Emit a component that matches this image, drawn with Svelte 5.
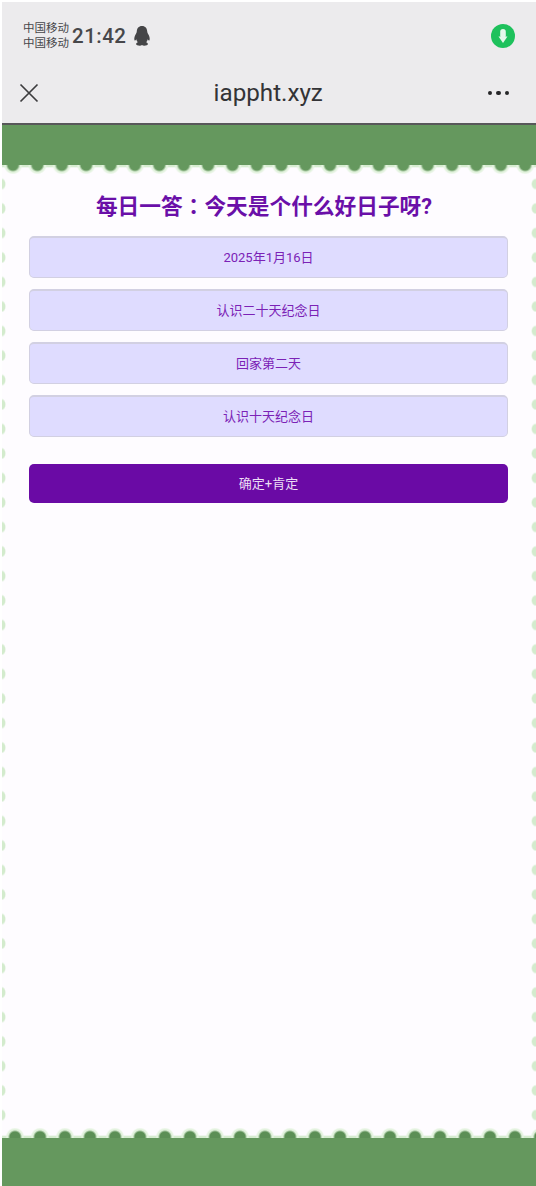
<script>
  const options = ["2025年1月16日", "认识二十天纪念日", "回家第二天", "认识十天纪念日"];
</script>

<div class="page">
  <header class="chrome">
    <div class="status">
      <div class="carriers">
        <span>中国移动</span>
        <span>中国移动</span>
      </div>
      <span class="time">21:42</span>
      <!-- QQ penguin -->
      <svg class="qq" viewBox="0 0 16 20" width="16" height="20">
        <path d="M8 0C4.600 0 3 2.400 2.800 5.200 2.700 6.600 2.200 7.400 1.400 8.800.4 10.800 0 12.800.5 14.200c.4.800 1.200.2 1.800-1 .2 1.200.8 2.200 1.600 3-1 .4-1.800 1-1.800 1.800 0 1 1.700 1.700 3.700 1.700.9 0 1.700-.3 2.200-.7.5.4 1.300.7 2.200.7 2 0 3.700-.7 3.700-1.700 0-.8-.8-1.400-1.800-1.800.8-.8 1.400-1.800 1.600-3 .6 1.200 1.400 1.800 1.800 1 .5-1.400.1-3.400-.9-5.400-.8-1.400-1.300-2.200-1.400-3.600C13 2.400 11.400 0 8 0z" />
      </svg>
      <svg class="mic" viewBox="0 0 24 24" width="24" height="24">
        <circle cx="12" cy="12" r="12" fill="#1ec15c" />
        <rect x="9.200" y="5" width="5.600" height="9" rx="2.800" fill="#e4f8ea" />
        <path d="M7.500 12.500L12 19l4.500-6.500z" fill="#e4f8ea" />
      </svg>
    </div>
    <div class="nav">
      <svg class="close" viewBox="0 0 20 20" width="20" height="20">
        <path d="M1.500 1.500l17 17M18.500 1.500l-17 17" />
      </svg>
      <span class="site">iappht.xyz</span>
      <div class="more"><i></i><i></i><i></i></div>
    </div>
  </header>

  <div class="band"></div>

  <main class="card">
    <div class="edge-top"></div>
    <h1>每日一答<span class="colon">：</span>今天是个什么好日子呀?</h1>
    <div class="options">
      {#each options as label}
        <button class="option">{label}</button>
      {/each}
    </div>
    <button class="confirm">确定+肯定</button>
    <div class="spacer"></div>
    <div class="edge-bottom"></div>
  </main>

  <div class="band foot"></div>
</div>

<style>
  :global(body) {
    background: #fff;
  }
  .page {
    height: 1186px;
    box-sizing: border-box;
    padding: 2px 0 0 2px;
    display: flex;
    flex-direction: column;
    font-family: Roboto, "Noto Sans CJK SC", sans-serif;
  }
  .chrome {
    height: 123px;
    box-sizing: border-box;
    background: #ecebed;
    border-bottom: 2px solid #58585a;
    flex: none;
  }
  .status {
    height: 68px;
    display: flex;
    align-items: center;
    padding: 0 21px;
    color: #47474a;
  }
  .carriers {
    display: flex;
    flex-direction: column;
    font-size: 11.500px;
    line-height: 15px;
    margin-right: 3px;
  }
  .time {
    font-size: 20.500px;
    font-weight: 500;
    letter-spacing: 0.5px;
    margin-right: 7px;
  }
  .qq {
    fill: #454547;
  }
  .mic {
    margin-left: auto;
    margin-top: -1px;
  }
  .nav {
    height: 46px;
    display: flex;
    align-items: center;
    justify-content: space-between;
    padding: 0 27px 0 17px;
  }
  .close {
    fill: none;
    stroke: #3c3c3e;
    stroke-width: 1.700;
  }
  .site {
    flex: 1;
    text-align: center;
    font-size: 24.200px;
    color: #333336;
    padding-left: 10px;
  }
  .more {
    display: flex;
    gap: 4px;
  }
  .more i {
    width: 4.500px;
    height: 4.500px;
    border-radius: 50%;
    background: #262628;
  }
  .band {
    height: 40px;
    background: #65985e;
    flex: none;
  }
  .band.foot {
    height: 48px;
  }
  .card {
    flex: 1;
    display: flex;
    flex-direction: column;
    background-color: #fefcff;
    background-image:
      radial-gradient(ellipse 4px 6px at 0 19px, #d3ebcd 70%, transparent 100%),
      radial-gradient(ellipse 5px 6px at 100% 19px, #d3ebcd 70%, transparent 100%);
    background-size: 100% 24.500px;
    background-repeat: repeat-y;
  }
  .edge-top,
  .edge-bottom {
    height: 10px;
    flex: none;
    background-repeat: repeat-x;
  }
  .edge-top {
    background-color: #fefcff;
    background-image:
      radial-gradient(circle at 11px 0, #65985e 5px, #dff0da 7px, #e6f4e2 8px, transparent 9.500px),
      linear-gradient(#d6ecd0 1.500px, transparent 3px);
    background-size: 24.400px 10px;
  }
  .edge-bottom {
    background-color: #fefcff;
    background-image:
      radial-gradient(circle at 13px 9px, #5c8f56 5px, #dff0da 7px, #e6f4e2 8px, transparent 9.500px),
      linear-gradient(transparent 7px, #d6ecd0 8.500px);
    background-size: 25px 10px;
  }
  h1 {
    margin: 15px 10px 0 0;
    text-align: center;
    font-size: 21.700px;
    line-height: 30px;
    font-weight: 700;
    color: #6a0fa8;
  }
  .colon {
    font-family: "Noto Sans CJK TC", sans-serif;
  }
  .options {
    display: flex;
    flex-direction: column;
    gap: 11px;
    margin: 14px 28px 0 27px;
  }
  button {
    display: block;
    font: inherit;
    font-size: 13px;
    padding: 0 0 2px;
    box-sizing: border-box;
  }
  .option {
    height: 42px;
    background: #dfdcff;
    border: 1px solid #d2d0e2;
    border-top-width: 2px;
    border-radius: 5px;
    color: #7b22b6;
  }
  .confirm {
    height: 39px;
    margin: 27px 28px 0 27px;
    background: #6a0aa5;
    border: none;
    border-radius: 5px;
    color: #ecdff5;
  }
  .spacer {
    flex: 1;
  }
</style>
